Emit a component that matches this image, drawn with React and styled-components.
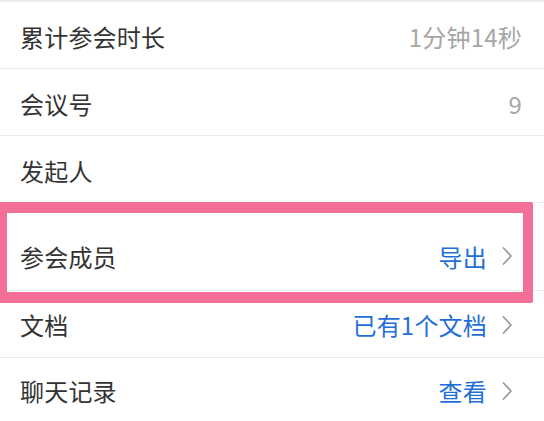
import React from "react";
import styled, { createGlobalStyle } from "styled-components";

const Global = createGlobalStyle`
  html, body { margin: 0; padding: 0; background: #ffffff; }
  body { font-family: "Noto Sans CJK SC", "Noto Sans", sans-serif; overflow: hidden; }
`;

const List = styled.div`
  border-top: 2px solid #ececec;
  background: #fff;
`;

const Row = styled.div`
  position: relative;
  display: flex;
  align-items: center;
  justify-content: space-between;
  height: ${(p) => p.$h || 66}px;
  padding: ${(p) => p.$pt || 0}px 22px 0 20px;
  box-sizing: content-box;
  border-bottom: 1px solid #ebebeb;
`;

const Label = styled.span`
  font-size: 24px;
  color: #333333;
  letter-spacing: 0.2px;
  margin-top: ${(p) => p.$shift || 2}px;
`;

const Right = styled.div`
  display: flex;
  align-items: center;
  gap: 14px;
  margin-top: ${(p) => p.$shift || 2}px;
`;

const Value = styled.span`
  font-size: 24px;
  color: ${(p) => (p.$link ? "#1f6fd8" : "#a6a6a6")};
  letter-spacing: 0.2px;
`;

const ChevronBox = styled.span`
  display: flex;
  align-items: center;
  margin-right: 9px;
`;

const Frame = styled.div`
  position: absolute;
  left: -3px;
  right: 11px;
  top: -1px;
  bottom: -13px;
  border: 10px solid #f27098;
  border-top-width: 11px;
  border-bottom-width: 11px;
  border-radius: 2px;
  pointer-events: none;
  z-index: 2;
`;

const Chevron = () => (
  <ChevronBox>
    <svg width="12" height="20" viewBox="0 0 12 20" fill="none">
      <path d="M2.5 2 L10 10 L2.5 18" stroke="#9c9c9c" strokeWidth="1.8" strokeLinecap="round" strokeLinejoin="round" />
    </svg>
  </ChevronBox>
);

const rows = [
  { label: "累计参会时长", value: "1分钟14秒", shift: 2 },
  { label: "会议号", value: "9", shift: 2 },
  { label: "发起人", shift: 2 },
  { label: "参会成员", value: "导出", link: true, chevron: true, highlight: true, h: 67, pt: 20, shift: -1 },
  { label: "文档", value: "已有1个文档", link: true, chevron: true, shift: 1 },
  { label: "聊天记录", value: "查看", link: true, chevron: true, shift: -1 },
];

export default function App() {
  return (
    <>
      <Global />
      <List>
        {rows.map((r) => (
          <Row key={r.label} $h={r.h} $pt={r.pt}>
            <Label $shift={r.shift}>{r.label}</Label>
            <Right $shift={r.shift}>
              {r.value && <Value $link={r.link}>{r.value}</Value>}
              {r.chevron && <Chevron />}
            </Right>
            {r.highlight && <Frame />}
          </Row>
        ))}
      </List>
    </>
  );
}
